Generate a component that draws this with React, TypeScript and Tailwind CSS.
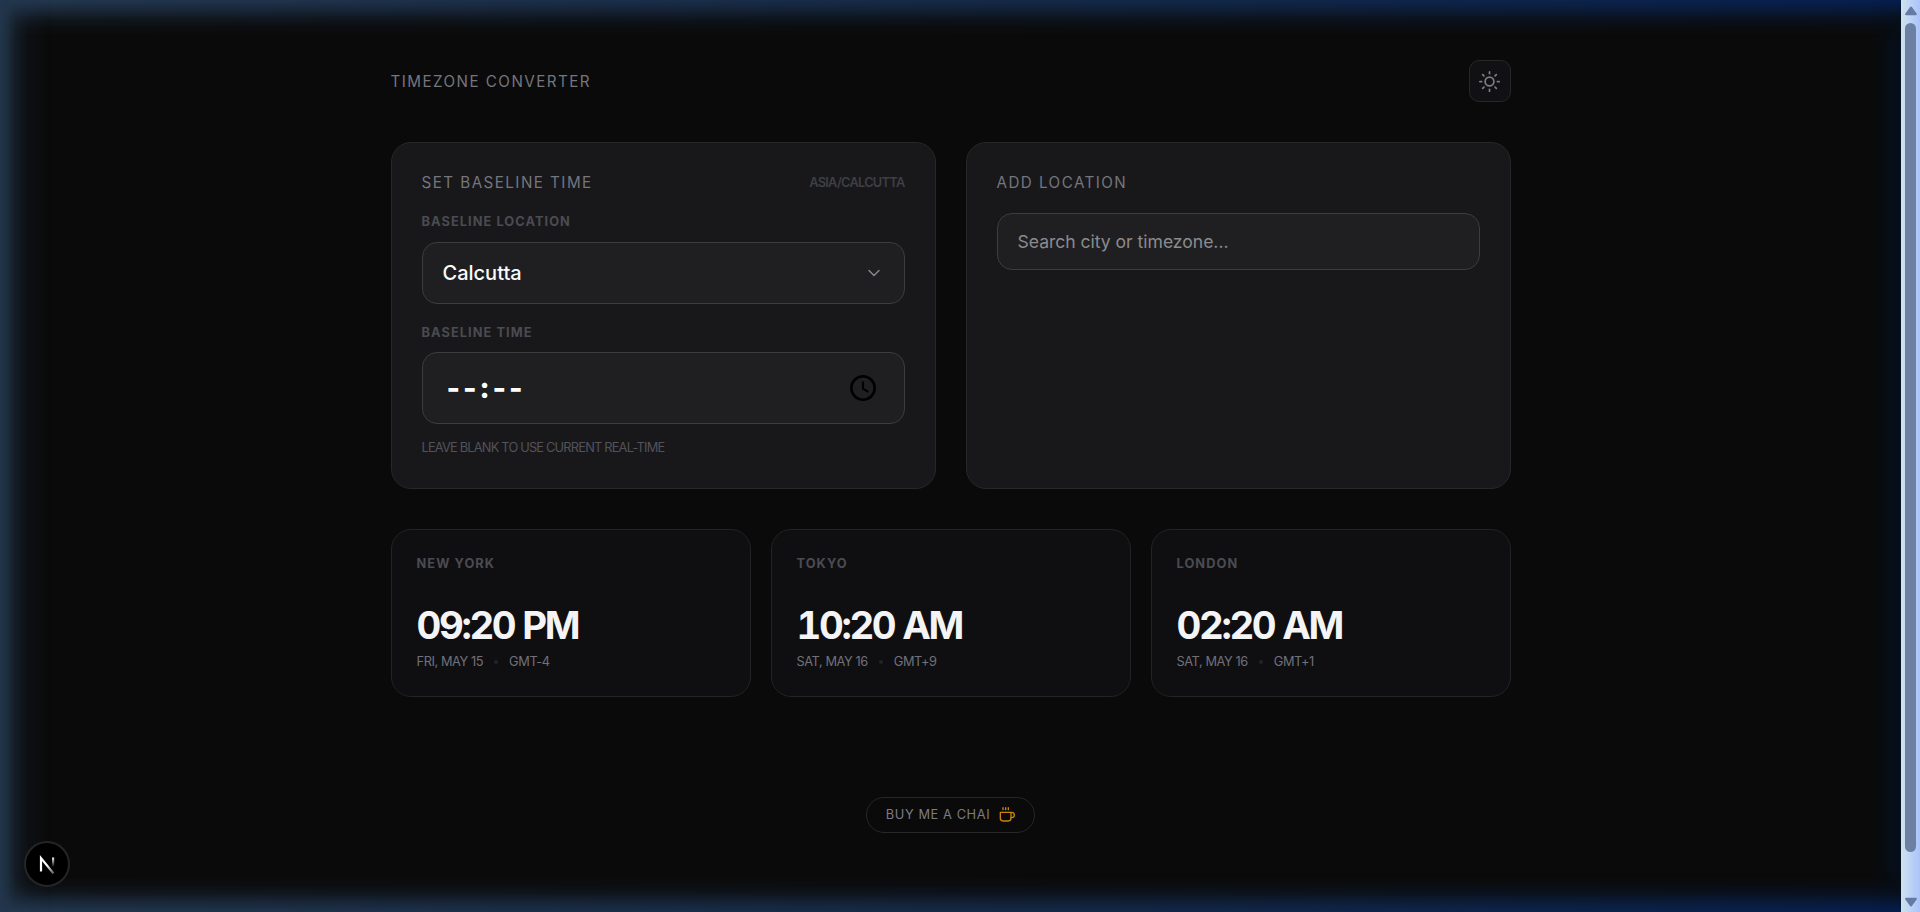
import { ReactNode } from 'react';
import { ChevronDown } from 'lucide-react';
import { FiCoffee, FiSun } from 'react-icons/fi';

type Zone = {
  city: string;
  time: string;
  date: string;
  offset: string;
};

const zones: Zone[] = [
  { city: 'New York', time: '09:20 PM', date: 'Fri, May 15', offset: 'GMT-4' },
  { city: 'Tokyo', time: '10:20 AM', date: 'Sat, May 16', offset: 'GMT+9' },
  { city: 'London', time: '02:20 AM', date: 'Sat, May 16', offset: 'GMT+1' },
];

function Panel({ children }: { children: ReactNode }) {
  return (
    <section className="h-[347px] flex-1 rounded-[20px] border border-[#27272a] bg-[#18181a] px-[30px] pt-[30px]">
      {children}
    </section>
  );
}

function PanelTitle({ children }: { children: ReactNode }) {
  return (
    <h2 className="text-[15.2px] leading-5 font-normal tracking-[1.45px] text-[#75757e] uppercase">
      {children}
    </h2>
  );
}

function Label({ children }: { children: ReactNode }) {
  return (
    <span className="block text-[12.8px] leading-4 font-bold tracking-[1.06px] text-[#4b4b51] uppercase">
      {children}
    </span>
  );
}

function ZoneCard({ zone }: { zone: Zone }) {
  return (
    <article className="h-[168px] rounded-[20px] border border-[#232325] bg-[#0f0f11] px-[25px] pt-[26px]">
      <Label>{zone.city}</Label>
      <p className="mt-[30px] text-[38.4px] leading-[46px] font-bold tracking-[-2.35px] text-[#f4f4f5] tabular-nums">
        {zone.time}
      </p>
      <div className="mt-[6px] flex items-center gap-[11px] text-[12.8px] leading-4 tracking-[-0.42px] text-[#71717a] uppercase">
        <span>{zone.date}</span>
        <span className="size-[4px] rounded-full bg-[#232326]" />
        <span>{zone.offset}</span>
      </div>
    </article>
  );
}

function Scrollbar() {
  return (
    <div className="flex w-[19px] flex-col items-center bg-linear-to-r from-[#d0e2ee] to-[#a9c4fb] pt-[6px] pb-[5px]">
      <svg width="12" height="10" viewBox="0 0 12 10" fill="#637ba5">
        <path d="M5.1 1q.9-1.2 1.8 0l4.7 6.6q.8 1.6-1 1.6H1.4q-1.8 0-1-1.6z" />
      </svg>
      <div className="mt-[7px] h-[829px] w-[11px] rounded-full bg-[#6c80a2]" />
      <svg className="mt-auto" width="12" height="10" viewBox="0 0 12 10" fill="#637ba5">
        <path d="M5.1 9q.9 1.2 1.8 0l4.7-6.6q.8-1.6-1-1.6H1.4q-1.8 0-1 1.6z" />
      </svg>
    </div>
  );
}

// Soft blue light around the edges of the window
function EdgeGlow() {
  return (
    <div className="pointer-events-none absolute inset-y-0 right-[19px] left-0 overflow-hidden">
      <div className="absolute inset-x-0 top-0 h-[38px] bg-linear-to-r from-[#23374f] via-[#162b48] to-[#07204f] [mask-image:linear-gradient(to_bottom,black,rgba(0,0,0,0.66)_28%,rgba(0,0,0,0.3)_50%,rgba(0,0,0,0.08)_75%,transparent)]" />
      <div className="absolute inset-x-0 bottom-0 h-[38px] bg-linear-to-r from-[#23374f] via-[#162b48] to-[#07204f] [mask-image:linear-gradient(to_top,black,rgba(0,0,0,0.66)_28%,rgba(0,0,0,0.3)_50%,rgba(0,0,0,0.08)_75%,transparent)]" />
      <div className="absolute inset-y-0 left-0 w-[50px] bg-[#22364b] [mask-image:linear-gradient(to_right,black,rgba(0,0,0,0.8)_15%,rgba(0,0,0,0.4)_32%,rgba(0,0,0,0.12)_58%,transparent)]" />
      <div className="absolute inset-y-0 right-0 w-[30px] bg-linear-to-l from-[#04101d] to-transparent mask-t-from-95% mask-b-from-95%" />
    </div>
  );
}

export default function App() {
  return (
    <div className="relative flex h-screen overflow-hidden bg-[#0a0a0a] font-['Inter',sans-serif]">
      <EdgeGlow />
      <main className="flex-1 pt-[60px]">
        <div className="mx-auto w-[1120px]">
          <header className="flex h-[42px] items-center justify-between">
            <h1 className="pt-px text-[15.2px] leading-5 font-normal tracking-[1.45px] text-[#75757e] uppercase">
              Timezone Converter
            </h1>
            <button className="flex size-[42px] items-center justify-center rounded-[10px] border border-[#27272a] bg-[#111113] text-[#7c7c84]">
              <FiSun size={21} />
            </button>
          </header>

          <div className="mt-10 flex gap-[30px]">
            <Panel>
              <div className="flex items-center justify-between">
                <PanelTitle>Set Baseline Time</PanelTitle>
                <span className="text-[12.8px] leading-4 font-semibold tracking-[-0.72px] text-[#3f3f44] uppercase">
                  Asia/Calcutta
                </span>
              </div>
              <div className="mt-[21px]">
                <Label>Baseline Location</Label>
              </div>
              <button className="mt-3 flex h-[62px] w-full items-center justify-between rounded-[15px] border border-[#3d3d40] bg-[#1f1f21] px-5 text-[20px] font-medium text-[#fafafa]">
                Calcutta
                <ChevronDown size={20} strokeWidth={1.8} color="#85858d" />
              </button>
              <div className="mt-[21px]">
                <Label>Baseline Time</Label>
              </div>
              <div className="mt-[11px] flex h-[72px] items-center justify-between rounded-[15px] border border-[#3d3d40] bg-[#1f1f21] pr-[27px] pl-6">
                <span className="text-[28.8px] font-extrabold tracking-[2.9px] text-white">--:--</span>
                <svg width="28" height="28" viewBox="0 0 24 24" fill="none" stroke="#000" strokeWidth="2.2">
                  <circle cx="12" cy="12" r="10" />
                  <path d="M12 6.5v6l4.5 2.8" strokeWidth="1.8" />
                </svg>
              </div>
              <p className="mt-4 text-[12.8px] leading-4 tracking-[-0.79px] text-[#52525b] uppercase">
                Leave blank to use current real-time
              </p>
            </Panel>

            <Panel>
              <PanelTitle>Add Location</PanelTitle>
              <input
                className="mt-5 h-[57px] w-full rounded-[15px] border border-[#3d3d40] bg-[#1f1f21] px-5 text-[17.6px] tracking-[-0.04px] outline-none placeholder:text-[#8b8b8e]"
                placeholder="Search city or timezone..."
              />
            </Panel>
          </div>

          <div className="mt-10 grid grid-cols-3 gap-5">
            {zones.map((zone) => (
              <ZoneCard key={zone.city} zone={zone} />
            ))}
          </div>

          <footer className="mt-[100px] flex justify-center">
            <button className="flex h-9 w-[169px] items-center justify-center gap-[9px] rounded-full border border-[#27272a] text-[12.8px] font-normal tracking-[0.6px] text-[#7b7b83] uppercase">
              Buy me a chai
              <FiCoffee size={16} color="#c9830f" />
            </button>
          </footer>
        </div>
      </main>

      <div className="absolute top-[841px] left-[24px] flex size-[46px] items-center justify-center rounded-full border-2 border-[#252527] bg-black">
        <svg width="20" height="20" viewBox="0 0 20 20" fill="none">
          <defs>
            <linearGradient id="diagonal" x1="10" y1="11" x2="17" y2="20" gradientUnits="userSpaceOnUse">
              <stop stopColor="#fff" />
              <stop offset="1" stopColor="#fff" stopOpacity="0.3" />
            </linearGradient>
            <linearGradient id="stem" x1="0" y1="3" x2="0" y2="13" gradientUnits="userSpaceOnUse">
              <stop stopColor="#fff" />
              <stop offset="1" stopColor="#fff" stopOpacity="0" />
            </linearGradient>
          </defs>
          <path d="M4 17.5V4L16.5 19.5" stroke="url(#diagonal)" strokeWidth="2.2" />
          <rect x="15" y="3.5" width="2.2" height="9.5" fill="url(#stem)" />
        </svg>
      </div>
      <Scrollbar />
    </div>
  );
}
